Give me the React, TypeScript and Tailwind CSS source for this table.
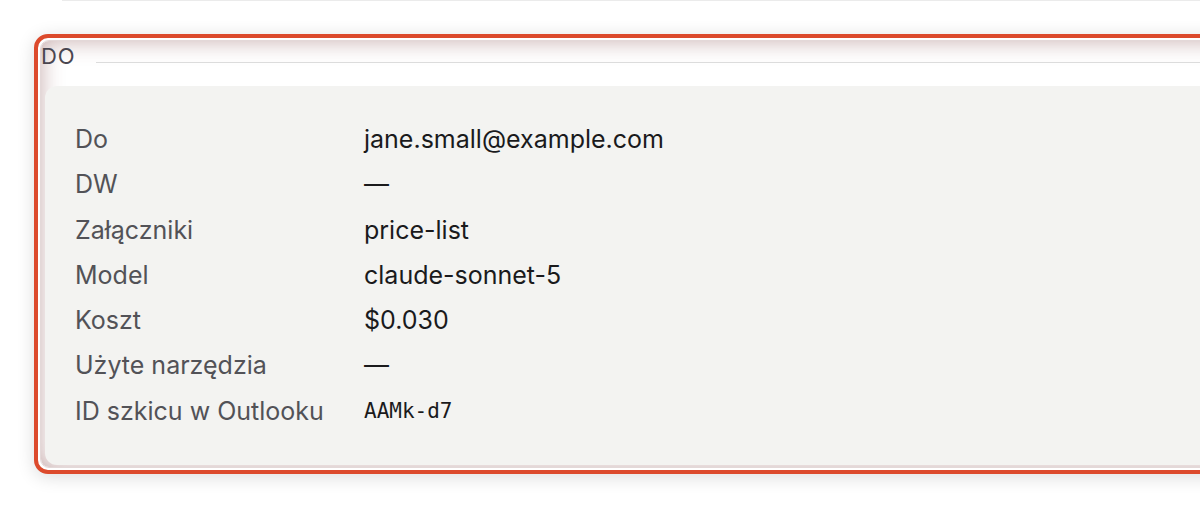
// 초안 상세 카드: 수신자, 첨부, 모델, 비용 등 메타 정보를 라벨/값 두 열로 표시한다
const rows: { label: string; value: string; mono?: boolean }[] = [
  { label: 'Do', value: 'jane.small@example.com' },
  { label: 'DW', value: '—' },
  { label: 'Załączniki', value: 'price-list' },
  { label: 'Model', value: 'claude-sonnet-5' },
  { label: 'Koszt', value: '$0.030' },
  { label: 'Użyte narzędzia', value: '—' },
  { label: 'ID szkicu w Outlooku', value: 'AAMk-d7', mono: true },
]

export default function App() {
  return (
    <div className="h-[506px] w-[1200px] overflow-hidden bg-white font-['Inter','Noto_Sans',sans-serif]">
      {/* 위쪽 이전 카드의 하단 경계선 */}
      <div className="ml-[62px] h-px bg-[#ebebeb]" />

      {/* 선택된 카드 - 빨간 포커스 테두리 */}
      <div className="ml-[34px] mt-[33px] w-[1220px] rounded-[14px] border-4 border-[#dc4a2c] bg-white p-[2px] shadow-[0_3px_18px_rgba(0,0,0,0.14)]">
        <div className="rounded-[9px] border border-[#e3d8d8] shadow-[inset_0_0_22px_rgba(130,70,70,0.45)]">
          {/* 섹션 제목 + 구분선 */}
          <div className="flex items-end pt-[2px]">
            <span className="text-[22px] leading-[26px] tracking-[0.04em] text-[#4a4650]">DO</span>
            <div className="mb-[6px] ml-[21px] h-px flex-1 bg-[#dcdcdc]" />
          </div>

          {/* 상세 정보 패널 */}
          <div className="mb-[2px] ml-[4px] mt-[17px] rounded-tl-[12px] rounded-bl-[12px] bg-[#f3f3f1] pb-[31px] pl-[30px] pt-[31px]">
            <div className="grid grid-cols-[289px_1fr]">
              {rows.map((row) => (
                <div key={row.label} className="contents">
                  <span className="text-[25px] leading-[45.3px] text-[#525257]">{row.label}</span>
                  {row.mono ? (
                    <span className="font-['DejaVu_Sans_Mono',monospace] text-[21px] leading-[45.3px] text-[#1a1a1c]">
                      {row.value}
                    </span>
                  ) : (
                    <span className="text-[25px] leading-[45.3px] text-[#1a1a1c]">{row.value}</span>
                  )}
                </div>
              ))}
            </div>
          </div>
        </div>
      </div>
    </div>
  )
}
